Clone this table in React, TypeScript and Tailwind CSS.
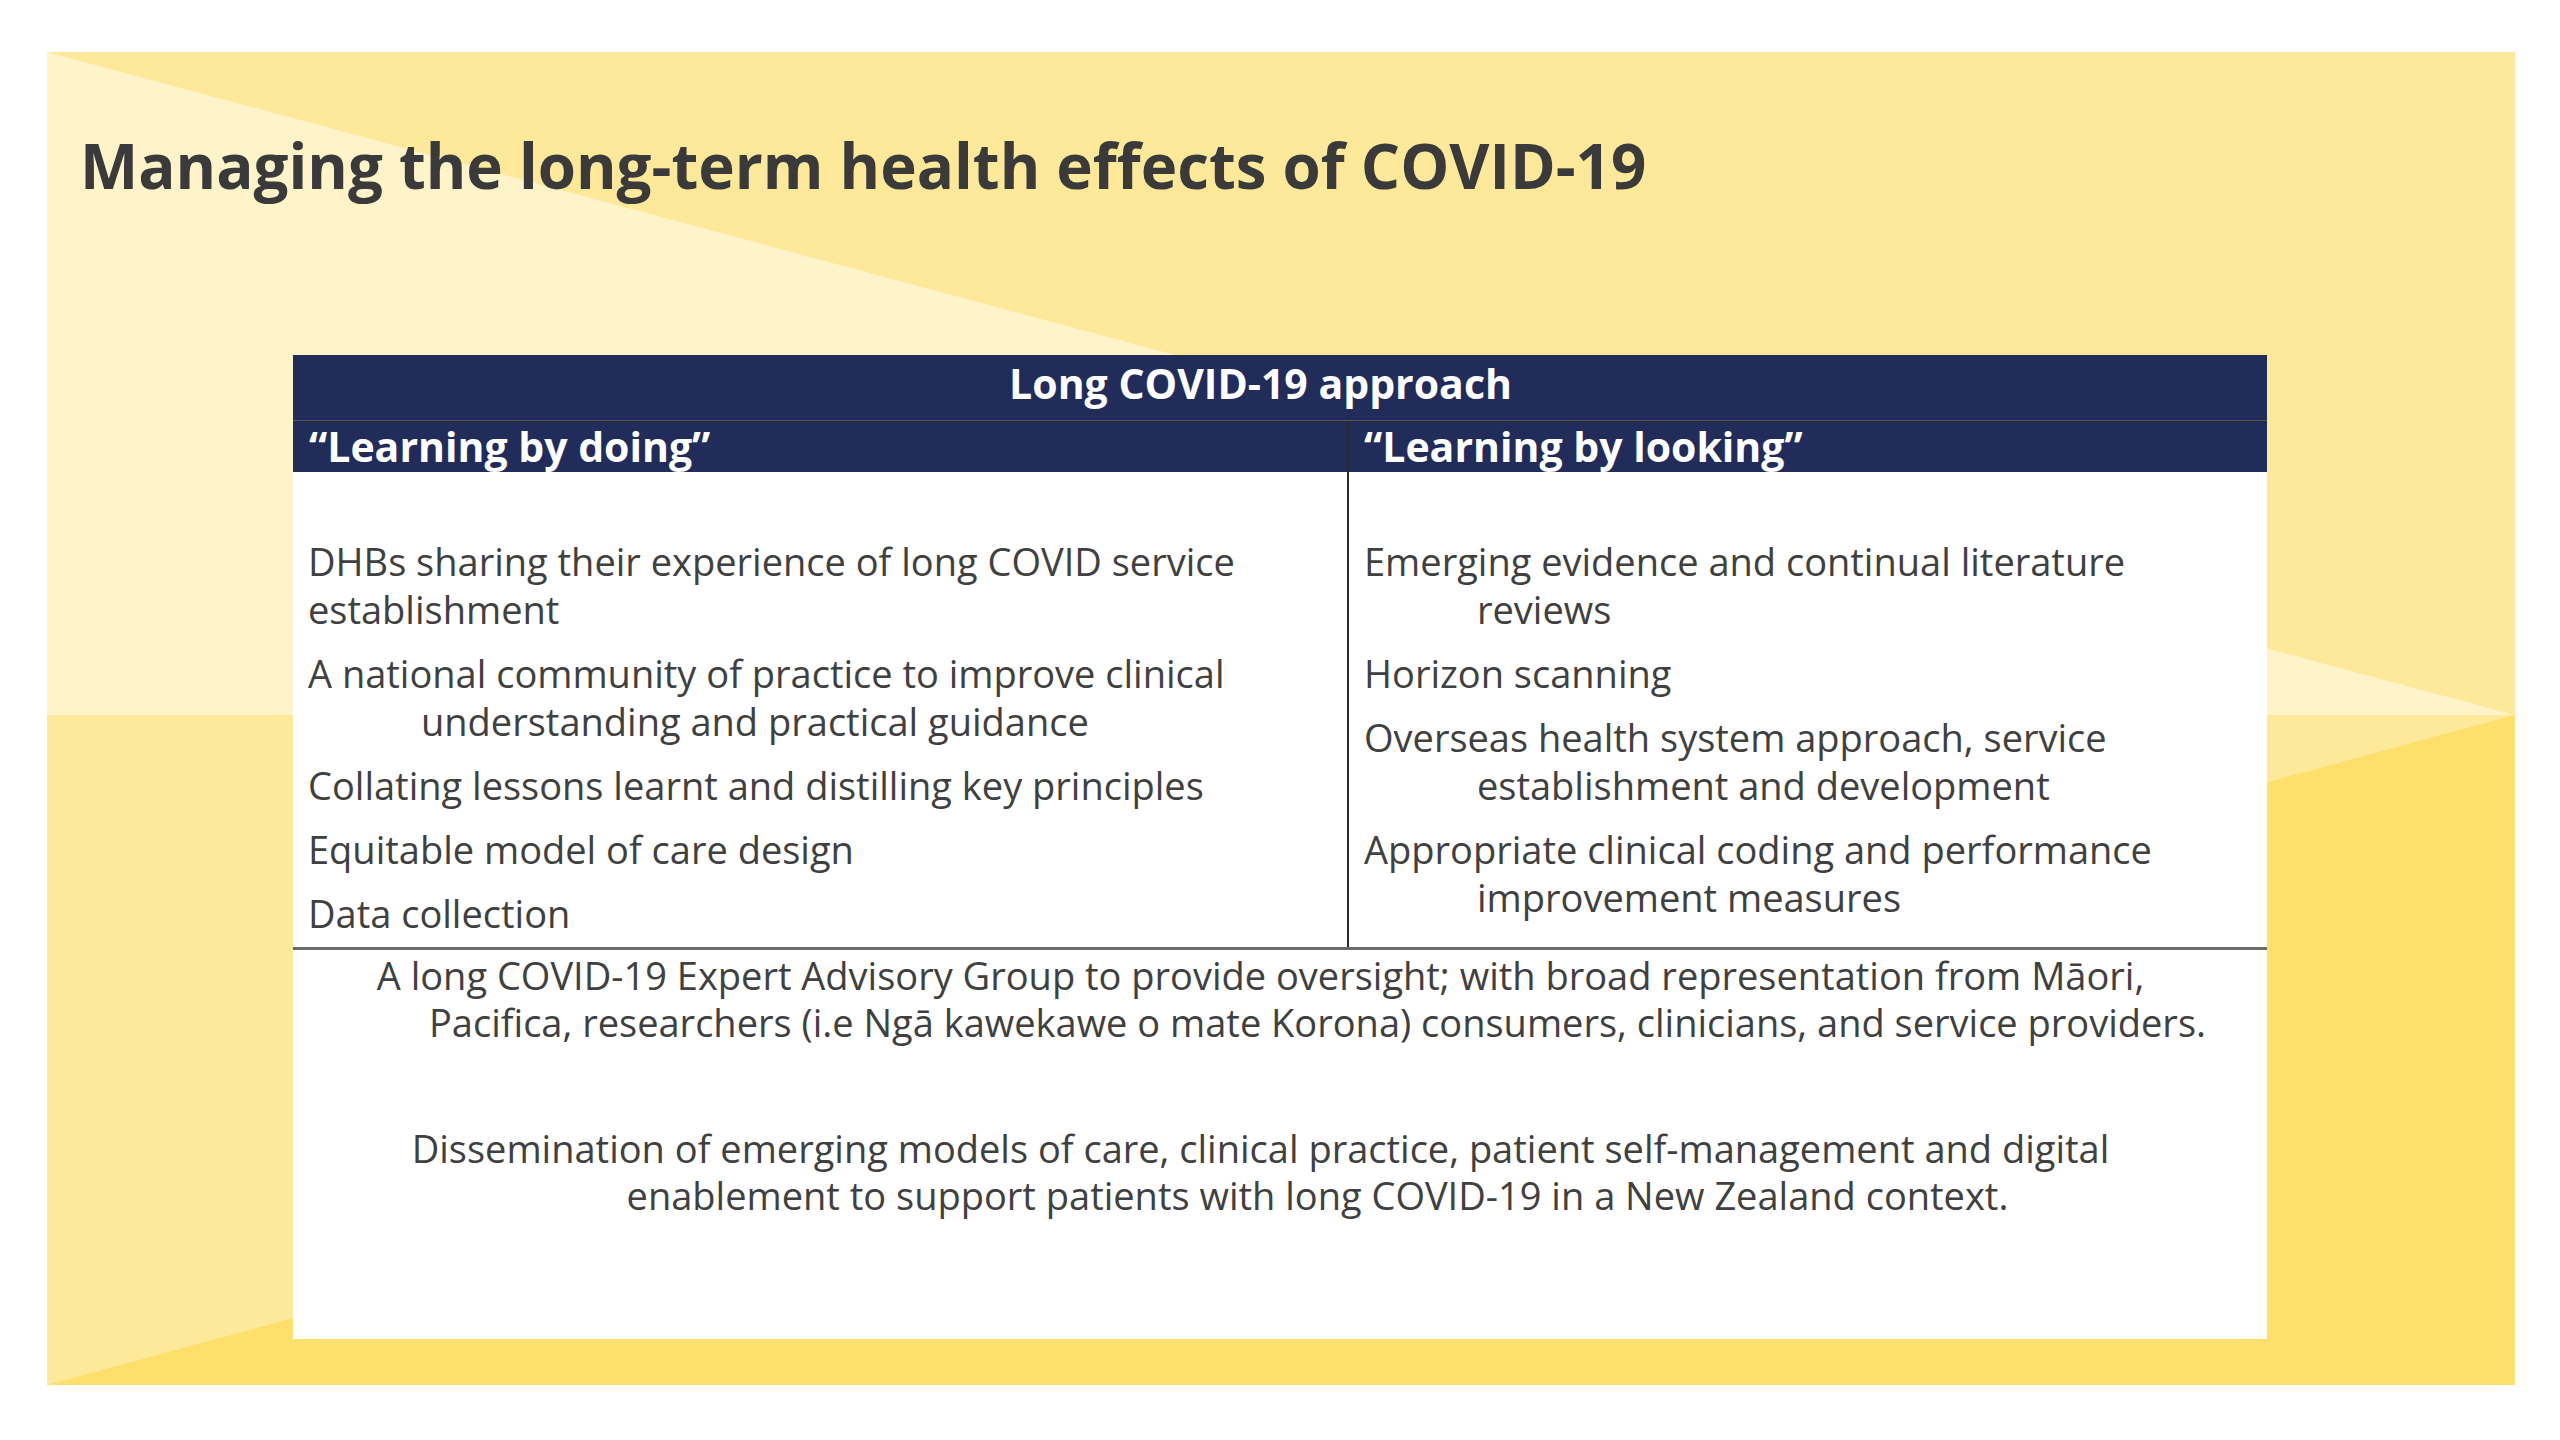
const doing = [
  { text: ['DHBs sharing their experience of long COVID service', 'establishment'], hang: false },
  { text: ['A national community of practice to improve clinical', 'understanding and practical guidance'], hang: true },
  { text: ['Collating lessons learnt and distilling key principles'], hang: true },
  { text: ['Equitable model of care design'], hang: true },
  { text: ['Data collection'], hang: true },
];

const looking = [
  { text: ['Emerging evidence and continual literature', 'reviews'], hang: true },
  { text: ['Horizon scanning'], hang: true },
  { text: ['Overseas health system approach, service', 'establishment and development'], hang: true },
  { text: ['Appropriate clinical coding and performance', 'improvement measures'], hang: true },
];

const Item = ({ text, hang }: { text: string[]; hang: boolean }) => (
  <p className={hang ? 'pl-[113px] [text-indent:-113px]' : ''}>
    {text.map((line, i) => (
      <span key={i}>
        {i > 0 && <br />}
        {line}
      </span>
    ))}
  </p>
);

const Background = () => (
  <svg className="absolute inset-0 h-full w-full" viewBox="0 0 2468 1333" preserveAspectRatio="none">
    <rect width="2468" height="1333" fill="#fee89a" />
    <polygon points="0,0 2468,663 0,663" fill="#fef3c9" />
    <polygon points="2468,663 2468,1333 0,1333" fill="#fddf6b" />
  </svg>
);

export default function App() {
  return (
    <div className="h-[1440px] w-[2560px] bg-white pl-[47px] pt-[52px] font-['Open_Sans',sans-serif]">
      <div className="relative h-[1333px] w-[2468px] overflow-hidden">
        <Background />
        <div className="relative flex flex-col">
          <h1 className="pl-[33px] pt-[77px] text-[61.8px] font-bold leading-[72px] text-[#3a3a3a]">
            Managing the long-term health effects of COVID-19
          </h1>

          <div className="ml-[246px] mt-[154px] flex w-[1974px] flex-col bg-white text-[38px] text-[#404040]">
            <div className="flex h-[66px] items-center justify-center border-b border-[#5a5244] bg-[#212c5b] pb-[8px] pr-[39px] text-[41px] font-bold leading-none text-white">
              Long COVID-19 approach
            </div>
            <div className="grid h-[51px] grid-cols-[1054px_1fr] bg-[#212c5b] text-[41px] font-bold leading-none text-white">
              <div className="flex items-center pl-[16px]">“Learning by doing”</div>
              <div className="flex items-center border-l-2 border-[#2a2a2a] pl-[15px]">“Learning by looking”</div>
            </div>

            <div className="grid h-[475px] grid-cols-[1054px_1fr] leading-[48px]">
              <div className="flex flex-col gap-[16px] pl-[15px] pt-[65px]">
                {doing.map((d, i) => (
                  <Item key={i} text={d.text} hang={d.hang} />
                ))}
              </div>
              <div className="flex flex-col gap-[16px] border-l-2 border-[#2a2a2a] pl-[15px] pt-[65px]">
                {looking.map((d, i) => (
                  <Item key={i} text={d.text} hang={d.hang} />
                ))}
              </div>
            </div>

            <div className="h-[3px] bg-[#6b6b6b]" />

            <div className="flex h-[389px] flex-col pl-[127px] pr-[52px] pt-[2px] text-center leading-[47px] [text-indent:-114px]">
              <p>
                A long COVID-19 Expert Advisory Group to provide oversight; with broad representation from Māori,
                <br />
                Pacifica, researchers (i.e Ngā kawekawe o mate Korona) consumers, clinicians, and service providers.
              </p>
              <p className="mt-[79px]">
                Dissemination of emerging models of care, clinical practice, patient self-management and digital
                <br />
                enablement to support patients with long COVID-19 in a New Zealand context.
              </p>
            </div>
          </div>
        </div>
      </div>
    </div>
  );
}
